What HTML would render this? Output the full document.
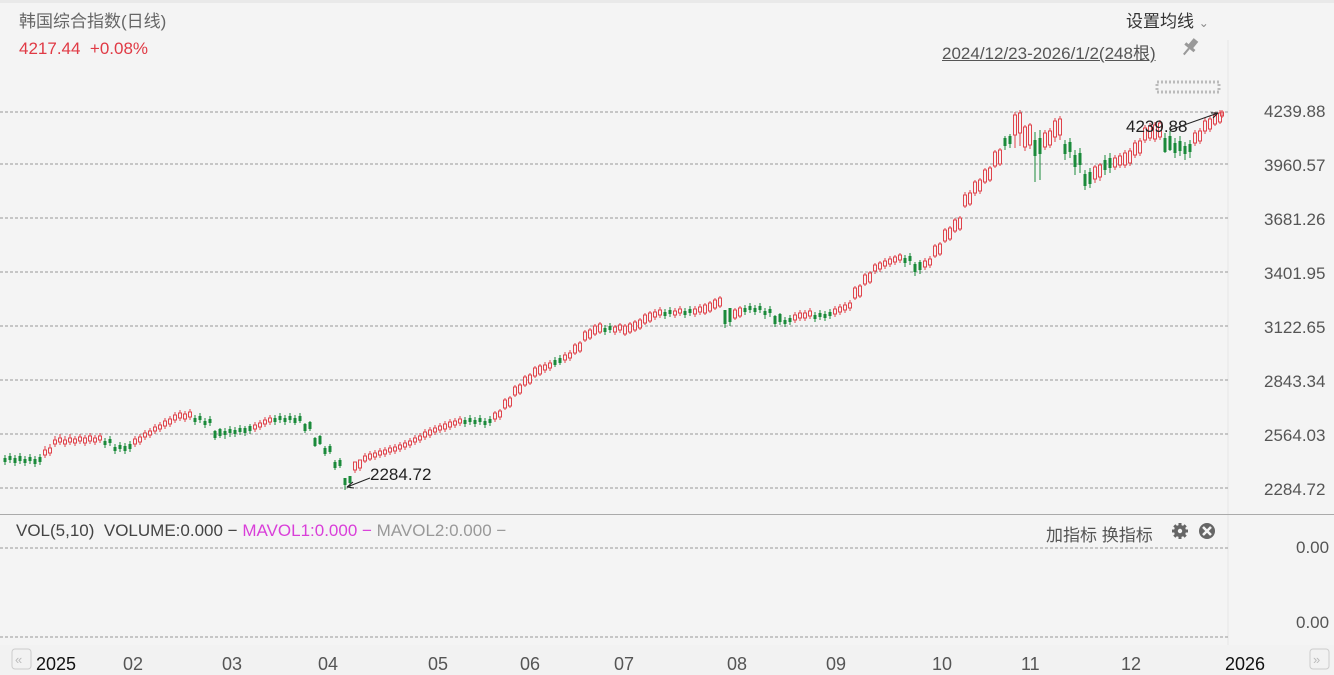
<!DOCTYPE html>
<html><head><meta charset="utf-8"><style>
body{margin:0;width:1334px;height:675px;background:#f4f4f4;overflow:hidden;font-family:"Liberation Sans","Noto Sans CJK SC",sans-serif;position:relative}
.t{position:absolute;white-space:nowrap}
</style></head><body>
<div style="position:absolute;left:0;top:0;width:1334px;height:3px;background:#e9e9e9"></div>
<div class="t" style="left:19px;top:7px;font-size:17px;color:#666">韩国综合指数(日线)</div>
<div class="t" style="left:19px;top:39px;font-size:17px;color:#e03a45">4217.44&nbsp; +0.08%</div>
<div class="t" style="left:1126px;top:7px;font-size:17px;color:#333">设置均线 <span style="font-size:12px;color:#888">⌄</span></div>
<div class="t" style="left:942px;top:39px;font-size:17px;color:#555;text-decoration:underline">2024/12/23-2026/1/2(248根)</div>
<svg width="1334" height="675" style="position:absolute;left:0;top:0">
<g transform="translate(1196,40) rotate(40)"><rect x="-3" y="0" width="6" height="9" fill="#999"/><rect x="-6" y="8" width="12" height="3" fill="#999"/><line x1="0" y1="11" x2="0" y2="19" stroke="#999" stroke-width="2"/></g>
<rect x="1157" y="82" width="62" height="10" fill="none" stroke="#bbb" stroke-width="3" stroke-dasharray="2 2"/>
<line x1="1228" y1="40" x2="1228" y2="645" stroke="#e6e6e6"/>
<g stroke="#999" stroke-dasharray="3 2">
<line x1="0" y1="112" x2="1228" y2="112"/><line x1="0" y1="164" x2="1228" y2="164"/><line x1="0" y1="218" x2="1228" y2="218"/><line x1="0" y1="272" x2="1228" y2="272"/><line x1="0" y1="326" x2="1228" y2="326"/><line x1="0" y1="380" x2="1228" y2="380"/><line x1="0" y1="434" x2="1228" y2="434"/><line x1="0" y1="488" x2="1228" y2="488"/>
<line x1="0" y1="548" x2="1228" y2="548"/><line x1="0" y1="637" x2="1228" y2="637"/>
</g>
<line x1="0" y1="514.5" x2="1334" y2="514.5" stroke="#aaa"/>
<rect x="0" y="645" width="1334" height="30" fill="#f2f2f2"/>
<g id="cs">
<path stroke="#1a8a3a" fill="#1a8a3a" d="
M5 455v10M15 455v11M25 456v10M35 456v11M105 438v10M115 444v10M125 443v11M195 415v10M205 418v10M215 430v10M225 428v11M235 427v10M245 426v10M275 415v10M285 415v10M295 415v10M305 423v10M315 437v10M325 446v10M335 460v10M345 478v12M465 417v10M475 417v10M485 418v10M555 357v10M605 325v10M665 309v10M685 308v10M725 314v14M745 305v10M755 305v10M765 308v11M775 315v12M785 317v10M815 312v10M825 311v10M905 255v12M915 262v14M1005 136v14M1035 132v50M1065 140v20M1075 150v25M1085 170v20M1105 155v20M1165 133v20M1175 138v20M1185 142v18"/>
<path fill="#1a8a3a" d="M3.5 458h3v4h-3zM13.5 458h3v5h-3zM23.5 459h3v4h-3zM33.5 459h3v5h-3zM103.5 441h3v4h-3zM113.5 447h3v4h-3zM123.5 446h3v5h-3zM193.5 418h3v4h-3zM203.5 421h3v4h-3zM213.5 431h3v7h-3zM223.5 431h3v4h-3zM233.5 430h3v4h-3zM243.5 428h3v5h-3zM273.5 418h3v4h-3zM283.5 418h3v4h-3zM293.5 418h3v5h-3zM303.5 424h3v7h-3zM313.5 438h3v8h-3zM323.5 448h3v6h-3zM333.5 462h3v6h-3zM343.5 478h3v7h-3zM463.5 420h3v4h-3zM473.5 420h3v4h-3zM483.5 421h3v4h-3zM553.5 360h3v5h-3zM603.5 328h3v4h-3zM663.5 312h3v4h-3zM683.5 311h3v4h-3zM723.5 310h3v14h-3zM743.5 308h3v4h-3zM753.5 308h3v4h-3zM763.5 311h3v4h-3zM773.5 316h3v8h-3zM783.5 320h3v4h-3zM813.5 315h3v4h-3zM823.5 314h3v4h-3zM903.5 258h3v5h-3zM913.5 264h3v8h-3zM1003.5 138h3v8h-3zM1033.5 140h3v16h-3zM1063.5 144h3v10h-3zM1073.5 155h3v12h-3zM1083.5 174h3v12h-3zM1103.5 160h3v10h-3zM1163.5 138h3v14h-3zM1173.5 143h3v10h-3zM1183.5 146h3v8h-3z"/>
<path stroke="#e0434b" fill="none" d="
M45 446v12M55 436v11M65 436v11M75 436v10M85 435v11M95 435v10M135 436v11M145 430v10M155 424v10M165 418v11M175 412v11M185 411v11M255 422v10M265 417v10M355 462v11M365 453v10M375 450v10M385 447v10M395 444v10M405 440v10M415 435v10M425 429v11M435 425v10M445 421v11M455 418v10M495 411v11M505 398v12M515 385v12M525 375v12M535 366v12M545 362v11M565 352v11M575 343v12M585 330v12M595 324v12M615 325v10M625 324v12M635 320v12M645 313v12M655 309v11M675 308v10M695 306v11M705 303v12M715 298v12M735 308v12M795 312v11M805 310v11M835 306v11M845 302v11M855 286v14M865 273v13M875 263v11M885 258v11M895 255v10M925 258v12M935 244v14M945 228v15M955 218v15M965 192v16M975 180v16M985 168v16M995 150v18M1015 112v36M1025 125v26M1045 130v20M1055 118v24M1095 165v18M1115 155v15M1125 150v18M1135 140v18M1145 125v18M1155 122v20M1195 130v16M1205 118v16M1215 112v14"/>
<path stroke="#e0434b" fill="#f4f4f4" d="M43.5 450h3v5h-3zM53.5 440h3v4h-3zM63.5 440h3v4h-3zM73.5 439h3v4h-3zM83.5 438h3v5h-3zM93.5 438h3v4h-3zM133.5 439h3v5h-3zM143.5 433h3v4h-3zM153.5 427h3v4h-3zM163.5 421h3v5h-3zM173.5 415h3v5h-3zM183.5 414h3v5h-3zM253.5 425h3v4h-3zM263.5 420h3v4h-3zM353.5 462h3v8h-3zM363.5 456h3v5h-3zM373.5 453h3v4h-3zM383.5 450h3v4h-3zM393.5 447h3v4h-3zM403.5 443h3v4h-3zM413.5 438h3v4h-3zM423.5 432h3v5h-3zM433.5 428h3v4h-3zM443.5 424h3v5h-3zM453.5 421h3v4h-3zM493.5 413h3v6h-3zM503.5 400h3v8h-3zM513.5 387h3v8h-3zM523.5 377h3v8h-3zM533.5 368h3v8h-3zM543.5 365h3v5h-3zM563.5 355h3v5h-3zM573.5 345h3v8h-3zM583.5 332h3v8h-3zM593.5 326h3v8h-3zM613.5 327h3v5h-3zM623.5 326h3v8h-3zM633.5 322h3v8h-3zM643.5 315h3v8h-3zM653.5 312h3v5h-3zM673.5 311h3v4h-3zM693.5 309h3v5h-3zM703.5 305h3v8h-3zM713.5 300h3v8h-3zM733.5 310h3v8h-3zM793.5 315h3v5h-3zM803.5 313h3v5h-3zM833.5 309h3v5h-3zM843.5 305h3v5h-3zM853.5 288h3v10h-3zM863.5 275h3v9h-3zM873.5 265h3v6h-3zM883.5 261h3v5h-3zM893.5 257h3v5h-3zM923.5 261h3v6h-3zM933.5 246h3v10h-3zM943.5 230h3v11h-3zM953.5 220h3v11h-3zM963.5 195h3v11h-3zM973.5 182h3v11h-3zM983.5 170h3v12h-3zM993.5 152h3v14h-3zM1013.5 115h3v20h-3zM1023.5 127h3v20h-3zM1043.5 133h3v14h-3zM1053.5 121h3v16h-3zM1093.5 167h3v12h-3zM1113.5 158h3v9h-3zM1123.5 153h3v12h-3zM1133.5 143h3v12h-3zM1143.5 128h3v12h-3zM1153.5 125h3v14h-3zM1193.5 133h3v10h-3zM1203.5 121h3v10h-3zM1213.5 115h3v9h-3z"/>
</g>
<use href="#cs" transform="translate(5,-2)"/>
<path stroke="#e0434b" fill="#f4f4f4" d="M1222 110v8M1220.5 112h3v4h-3z"/>
<line x1="370" y1="478" x2="347" y2="487" stroke="#222"/><path d="M347 487l6-5M347 487l7 1" stroke="#222" fill="none"/>
<line x1="1170" y1="130" x2="1218" y2="113" stroke="#222"/><path d="M1218 113l-7 0M1218 113l-5 5" stroke="#222" fill="none"/>
<g fill="#666"><circle cx="1180" cy="531" r="6"/><circle cx="1207" cy="531" r="8"/></g>
<g stroke="#666" stroke-width="3"><path d="M1180 523v16M1172 531h16M1174.3 525.3l11.4 11.4M1185.7 525.3l-11.4 11.4"/></g>
<circle cx="1180" cy="531" r="2.2" fill="#f4f4f4"/>
<path d="M1203 527l8 8M1211 527l-8 8" stroke="#f4f4f4" stroke-width="2.5"/>
<rect x="12" y="649" width="19" height="20" rx="3" fill="none" stroke="#ccc"/><text x="15" y="664" font-size="13" fill="#bbb">«</text>
<rect x="1310" y="649" width="19" height="20" rx="3" fill="none" stroke="#ccc"/><text x="1313" y="664" font-size="13" fill="#bbb">»</text>
</svg>
<div class="t" style="left:370px;top:465px;font-size:17px;color:#222">2284.72</div>
<div class="t" style="left:1126px;top:117px;font-size:17px;color:#222">4239.88</div>
<div style="position:absolute;left:1264px;top:85px;font-size:17px;color:#555;line-height:54px">4239.88<br>3960.57<br>3681.26<br>3401.95<br>3122.65<br>2843.34<br>2564.03<br>2284.72</div>
<div class="t" style="left:16px;top:521px;font-size:17px;color:#444">VOL(5,10)&nbsp; VOLUME:0.000 − <span style="color:#d93fd9">MAVOL1:0.000 −</span> <span style="color:#999">MAVOL2:0.000 −</span></div>
<div class="t" style="left:1046px;top:521px;font-size:17px;color:#555">加指标 换指标</div>
<div class="t" style="left:1296px;top:538px;font-size:17px;color:#555">0.00</div>
<div class="t" style="left:1296px;top:613px;font-size:17px;color:#555">0.00</div>
<div class="t" style="left:36px;top:654px;font-size:18px;color:#111">2025</div>
<div class="t" style="left:123px;top:654px;font-size:18px;color:#555">02</div>
<div class="t" style="left:222px;top:654px;font-size:18px;color:#555">03</div>
<div class="t" style="left:318px;top:654px;font-size:18px;color:#555">04</div>
<div class="t" style="left:428px;top:654px;font-size:18px;color:#555">05</div>
<div class="t" style="left:520px;top:654px;font-size:18px;color:#555">06</div>
<div class="t" style="left:614px;top:654px;font-size:18px;color:#555">07</div>
<div class="t" style="left:727px;top:654px;font-size:18px;color:#555">08</div>
<div class="t" style="left:826px;top:654px;font-size:18px;color:#555">09</div>
<div class="t" style="left:932px;top:654px;font-size:18px;color:#555">10</div>
<div class="t" style="left:1021px;top:654px;font-size:18px;color:#555">11</div>
<div class="t" style="left:1121px;top:654px;font-size:18px;color:#555">12</div>
<div class="t" style="left:1225px;top:654px;font-size:18px;color:#111">2026</div>
</body></html>
